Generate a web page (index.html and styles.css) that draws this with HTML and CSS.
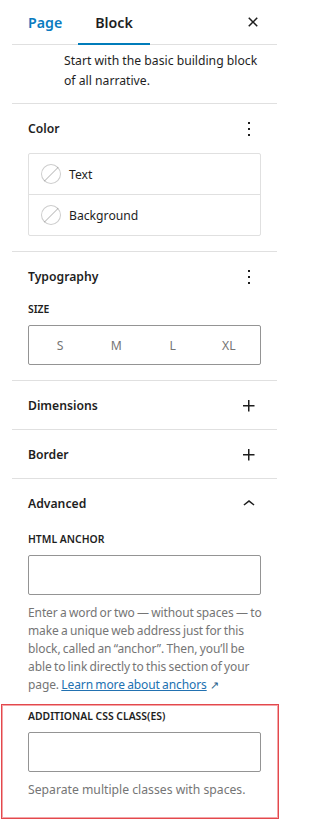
FILE: index.html
```html
<!DOCTYPE html>
<html lang="en">
<head>
<meta charset="utf-8">
<title>Block settings</title>
<link rel="stylesheet" href="styles.css">
</head>
<body>
<aside class="sidebar">
  <header class="tabs">
    <button class="tab tab-page">Page</button>
    <button class="tab tab-active">Block</button>
    <button class="icon-btn close" aria-label="Close settings">
      <svg viewBox="0 0 24 24" width="24" height="24"><path d="M12 13.06l3.712 3.713 1.061-1.06L13.061 12l3.712-3.712-1.06-1.06L12 10.938 8.288 7.227l-1.061 1.06L10.939 12l-3.712 3.712 1.06 1.061L12 13.061z"/></svg>
    </button>
  </header>

  <div class="block-card">
    <p class="block-desc">Start with the basic building block of all narrative.</p>
  </div>

  <section class="panel">
    <div class="panel-head">
      <h2 class="panel-title">Color</h2>
      <button class="icon-btn" aria-label="Color options">
        <svg viewBox="0 0 24 24" width="24" height="24"><path d="M13 19h-2v-2h2v2zm0-6h-2v-2h2v2zm0-6h-2V5h2v2z"/></svg>
      </button>
    </div>
    <div class="color-list">
      <div class="color-item"><span class="swatch"></span><span>Text</span></div>
      <div class="color-item"><span class="swatch"></span><span>Background</span></div>
    </div>
  </section>

  <section class="panel">
    <div class="panel-head">
      <h2 class="panel-title">Typography</h2>
      <button class="icon-btn" aria-label="Typography options">
        <svg viewBox="0 0 24 24" width="24" height="24"><path d="M13 19h-2v-2h2v2zm0-6h-2v-2h2v2zm0-6h-2V5h2v2z"/></svg>
      </button>
    </div>
    <div class="field-label label-size">Size</div>
    <div class="toggle-group">
      <span class="toggle-opt">S</span>
      <span class="toggle-opt">M</span>
      <span class="toggle-opt">L</span>
      <span class="toggle-opt">XL</span>
    </div>
  </section>

  <section class="panel panel-collapsed">
    <div class="panel-head">
      <h2 class="panel-title">Dimensions</h2>
      <button class="icon-btn" aria-label="Expand Dimensions">
        <svg viewBox="0 0 24 24" width="24" height="24"><path d="M11 12.5V17.5H12.5V12.5H17.5V11H12.5V6H11V11H6V12.5H11Z"/></svg>
      </button>
    </div>
  </section>

  <section class="panel panel-collapsed">
    <div class="panel-head">
      <h2 class="panel-title">Border</h2>
      <button class="icon-btn" aria-label="Expand Border">
        <svg viewBox="0 0 24 24" width="24" height="24"><path d="M11 12.5V17.5H12.5V12.5H17.5V11H12.5V6H11V11H6V12.5H11Z"/></svg>
      </button>
    </div>
  </section>

  <section class="panel panel-advanced">
    <div class="panel-head">
      <h2 class="panel-title">Advanced</h2>
      <button class="icon-btn" aria-label="Collapse Advanced">
        <svg viewBox="0 0 24 24" width="24" height="24"><path d="M6.5 12.4L12 8l5.5 4.4-.9 1.2L12 10l-4.6 3.6-1-1.2z"/></svg>
      </button>
    </div>

    <div class="field field-anchor">
      <label class="field-label" for="anchor">HTML anchor</label>
      <input class="text-input" id="anchor" type="text">
      <p class="help help-anchor">Enter a word or two — without spaces — to<br>make a unique web address just for this<br>block, called an “anchor”. Then, you’ll be<br>able to link directly to this section of your<br>page. <a class="help-link" href="#">Learn more about anchors</a><span class="ext">↗</span></p>
    </div>

    <div class="field highlight">
      <label class="field-label" for="css-class">Additional CSS class(es)</label>
      <input class="text-input" id="css-class" type="text">
      <p class="help">Separate multiple classes with spaces.</p>
    </div>
  </section>
</aside>
</body>
</html>
```

FILE: styles.css
```css
html, body {
  margin: 0;
  background: #fff;
}

body {
  font-family: "Noto Sans", "Open Sans", sans-serif;
  font-size: 12.2px;
  color: #1e1e1e;
}

.sidebar {
  margin-left: 12px;
  width: 265px;
}

/* Tabs */
.tabs {
  display: flex;
  align-items: center;
  height: 44px;
  border-bottom: 1px solid #e0e0e0;
}

.tab {
  position: relative;
  height: 44px;
  padding: 0 16px;
  border: 0;
  background: none;
  font-family: inherit;
  font-size: 14.2px;
  font-weight: 600;
  color: #1e1e1e;
  cursor: pointer;
}

.tab-page {
  color: #0a7bbf;
}

.tab-active {
  padding: 0 17px;
}

.tab-active::after {
  content: "";
  position: absolute;
  left: 0;
  right: 0;
  bottom: -1px;
  height: 2px;
  background: #007cba;
}

.icon-btn {
  display: flex;
  align-items: center;
  justify-content: center;
  width: 24px;
  height: 24px;
  padding: 0;
  border: 0;
  background: none;
  cursor: pointer;
}

.icon-btn svg {
  fill: #1e1e1e;
}

.close {
  margin-left: auto;
  margin-right: 12px;
}

/* Block card */
.block-card {
  padding: 6px 16px 13px 52px;
}

.block-desc {
  margin: 0;
  line-height: 19.5px;
}

/* Panels */
.panel {
  border-top: 1px solid #e0e0e0;
  padding: 13px 16px 15px;
}

.panel-collapsed {
  padding-bottom: 11px;
}

.panel-advanced {
  padding-bottom: 0;
}

.panel-head {
  display: flex;
  align-items: center;
  justify-content: space-between;
  height: 24px;
}

.panel-title {
  margin: 0;
  font-size: 12.2px;
  font-weight: 600;
  line-height: 18px;
}

/* Color list */
.color-list {
  margin-top: 12px;
  border: 1px solid #e0e0e0;
  border-radius: 2px;
}

.color-item {
  display: flex;
  align-items: center;
  gap: 8px;
  height: 40px;
  padding: 0 12px;
}

.color-item + .color-item {
  border-top: 1px solid #e0e0e0;
}

.swatch {
  width: 20px;
  height: 20px;
  border-radius: 50%;
  box-shadow: inset 0 0 0 1px rgba(0, 0, 0, 0.2);
  background: linear-gradient(135deg, transparent 48%, #d6d6d6 48%, #d6d6d6 53%, transparent 53%);
  flex: none;
}

/* Labels / fields */
.field-label {
  display: block;
  font-size: 10.4px;
  font-weight: 600;
  line-height: 16px;
  text-transform: uppercase;
}

.label-size {
  margin-top: 12px;
}

.toggle-group {
  display: flex;
  box-sizing: border-box;
  height: 40px;
  margin-top: 8px;
  padding: 3px;
  border: 1px solid #949494;
  border-radius: 2px;
}

.toggle-opt {
  flex: 1;
  display: flex;
  align-items: center;
  justify-content: center;
  color: #757575;
}

.field-anchor {
  margin-top: 15px;
}

.text-input {
  display: block;
  box-sizing: border-box;
  width: 100%;
  height: 40px;
  margin: 8px 0 0;
  padding: 0 8px;
  border: 1px solid #949494;
  border-radius: 2px;
  font-family: inherit;
  font-size: 12.2px;
  background: #fff;
}

.help {
  margin: 9px 0 0;
  color: #757575;
  font-size: 12.2px;
  line-height: 18px;
}

.help-anchor {
  font-size: 12px;
  letter-spacing: -0.1px;
  word-spacing: -0.7px;
  white-space: nowrap;
}

.help-link {
  color: #2271b1;
  text-decoration: underline;
}

.ext {
  margin-left: 3px;
  font-size: 10.5px;
  color: #2c5f8a;
}

/* Highlighted field (annotation frame) */
.highlight {
  margin: 10px -18px 0 -27px;
  padding: 3px 17px 19px 26px;
  border: 1px solid #e3484d;
  box-shadow: inset 0 0 0 1px #f4a5a7;
}
```
